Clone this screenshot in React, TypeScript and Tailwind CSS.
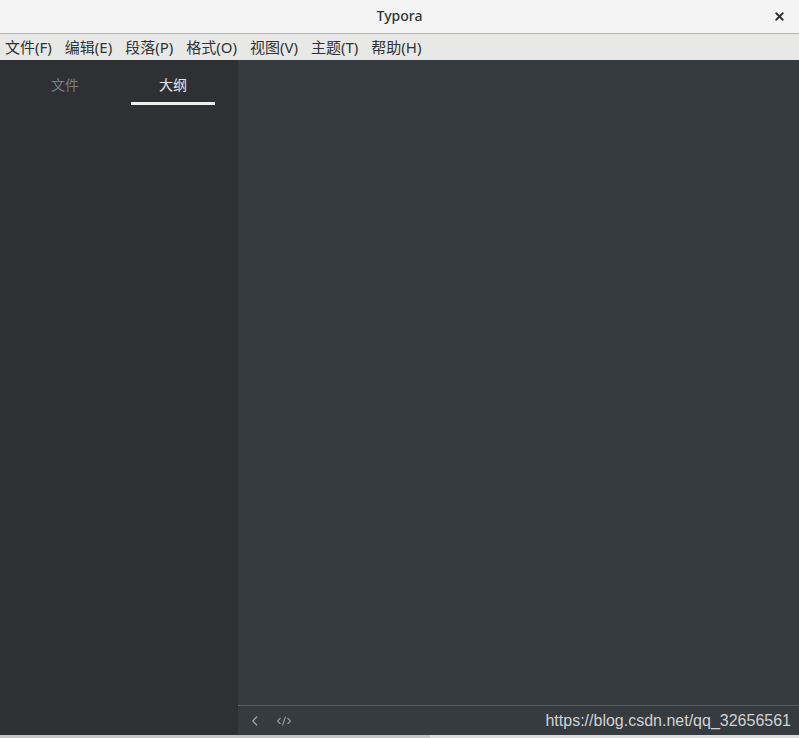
import { X } from "lucide-react";

const menus = ["文件(F)", "编辑(E)", "段落(P)", "格式(O)", "视图(V)", "主题(T)", "帮助(H)"];

function App() {
  return (
    <div
      className="flex h-[738px] w-[799px] flex-col overflow-hidden bg-[#f4f4f4]"
      style={{ fontFamily: '"Noto Sans", "Noto Sans CJK SC", sans-serif' }}
    >
      {/* title bar */}
      <div className="relative flex h-[34px] shrink-0 items-center justify-center border-b border-[#b3b3b0] bg-[#f4f4f4] pb-[2px]">
        <span className="text-[14px] font-medium text-[#2e3436]">Typora</span>
        <X className="absolute right-[13px] top-[10px] h-[13px] w-[13px] text-[#2e3436]" strokeWidth={3.5} />
      </div>

      {/* menu bar */}
      <div className="flex h-[26px] shrink-0 items-center gap-[13px] bg-[#e8e8e7] pl-[5px] text-[15px] text-[#2e3436]">
        {menus.map((m) => (
          <span key={m}>{m}</span>
        ))}
      </div>

      {/* body */}
      <div className="flex min-h-0 flex-1">
        <aside className="flex w-[238px] shrink-0 flex-col bg-[#2e3033]">
          <div className="flex justify-center gap-[24px] pt-[14px] text-[14px]">
            <div className="flex w-[84px] flex-col items-center">
              <span className="text-[#7d7f82]">文件</span>
            </div>
            <div className="flex w-[84px] flex-col items-center">
              <span className="text-[#e6e6e6]">大纲</span>
              <div className="mt-[7px] h-[3px] w-full bg-[#f0f0f0]" />
            </div>
          </div>
        </aside>

        <main className="flex flex-1 flex-col bg-[#363b40]">
          <div className="flex-1" />
          <div className="flex h-[30px] shrink-0 items-center border-t border-[#5a5e62] pl-[13px] text-[#9a9da0]">
            <svg width="8" height="12" viewBox="0 0 8 12" fill="none" stroke="currentColor" strokeWidth="1.4">
              <path d="M6 1.5 L1.8 6 L6 10.5" />
            </svg>
            <svg className="ml-[17px]" width="16" height="12" viewBox="0 0 16 12" fill="none" stroke="currentColor" strokeWidth="1.1">
              <path d="M4.5 3 L1.5 6 L4.5 9" />
              <path d="M9.5 1.5 L6.5 10.5" />
              <path d="M11.5 3 L14.5 6 L11.5 9" />
            </svg>
            <span
              className="ml-auto mr-[8px] text-[16px] text-[#d0d2d4]"
              style={{ fontFamily: '"Liberation Sans", Arial, sans-serif' }}
            >
              https://blog.csdn.net/qq_32656561
            </span>
          </div>
        </main>
      </div>

      {/* bottom strip */}
      <div className="flex h-[3px] shrink-0">
        <div className="w-[430px] bg-[#c4c4c4]" />
        <div className="flex-1 bg-[#dcdcdc]" />
      </div>
    </div>
  );
}

export default App;
